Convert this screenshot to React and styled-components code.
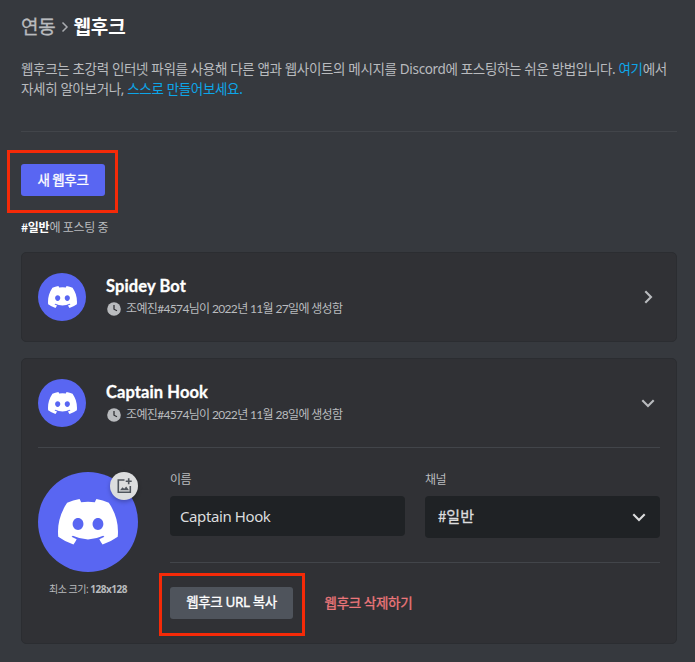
import React from "react";
import styled, { createGlobalStyle } from "styled-components";

const Global = createGlobalStyle`
  *, *::before, *::after { box-sizing: border-box; }
  body {
    margin: 0;
    background: #36393e;
    font-family: "Noto Sans CJK KR", sans-serif;
    overflow: hidden;
  }
`;

const Page = styled.main`
  width: 695px;
  height: 662px;
  padding: 0 18px 0 21px;
  display: flex;
  flex-direction: column;
  background: #36393e;
  color: #b9bbbe;
`;

const Line = styled.span`
  display: block;
  white-space: nowrap;
  font-family: ${(p) => (p.$latin ? `"${p.$latin}", ` : "")}"Noto Sans CJK KR", sans-serif;
  font-size: ${(p) => p.$size}px;
  line-height: ${(p) => p.$lh || 20}px;
  font-weight: ${(p) => p.$weight || 400};
  letter-spacing: ${(p) => p.$ls || 0}px;
  color: ${(p) => p.$color || "#b9bbbe"};
  -webkit-text-stroke: ${(p) => (p.$medium ? 0.3 : 0)}px;
`;

const Breadcrumb = styled.h1`
  display: flex;
  align-items: center;
  height: 24px;
  margin: 14px 0 0;
`;

const CrumbArrow = styled.svg`
  width: 8px;
  height: 12px;
  margin: 2px 4px 0 6px;
  fill: none;
  stroke: #a9abaf;
  stroke-width: 1.5;
`;

const Description = styled.p`
  margin: 21px 0 0;
`;

const Link = styled.a`
  color: #0da5e8;
`;

const Divider = styled.hr`
  width: 100%;
  height: 1px;
  border: 0;
  margin: ${(p) => p.$margin || 0};
  background: #42454a;
`;

const Button = styled.button`
  position: relative;
  display: flex;
  align-items: center;
  justify-content: center;
  width: ${(p) => p.$width}px;
  height: 32px;
  padding: 0 0 2px;
  border: 0;
  border-radius: 3px;
  background: ${(p) => (p.$primary ? "#5966f2" : "#4f545c")};
`;

const Highlight = styled.span`
  position: absolute;
  top: ${(p) => p.$top}px;
  left: ${(p) => p.$left}px;
  width: ${(p) => p.$width}px;
  height: 63px;
  border: 3px solid #f52a08;
  pointer-events: none;
`;

const Posting = styled.div`
  margin: 21px 0 16px;
`;

const Strong = styled.strong`
  font-weight: 700;
  color: #fff;
`;

const Card = styled.section`
  height: ${(p) => p.$height}px;
  margin-bottom: 16px;
  padding: 20px 16px;
  border: 1px solid #2b2d31;
  border-radius: 5px;
  background: #303135;
`;

const CardHeader = styled.header`
  display: flex;
  align-items: center;
  height: 48px;
`;

const Avatar = styled.div`
  position: relative;
  display: flex;
  flex-shrink: 0;
  align-items: center;
  justify-content: center;
  width: ${(p) => p.$size}px;
  height: ${(p) => p.$size}px;
  border-radius: 50%;
  background: #5966f2;
`;

const Logo = styled.svg`
  width: ${(p) => p.$width}px;
  height: auto;
  fill: #fff;
`;

const HookInfo = styled.div`
  flex: 1;
  margin-left: 20px;
`;

const Meta = styled.div`
  display: flex;
  align-items: center;
  gap: 5px;
  margin-top: 4px;
`;

const Clock = styled.svg`
  width: 14px;
  height: 14px;
  margin-left: 1px;
`;

const Chevron = styled.svg`
  width: 24px;
  height: 24px;
  fill: none;
  stroke: ${(p) => p.$color || "#b9bbbe"};
  stroke-width: 2.1;
`;

const Body = styled.div`
  display: grid;
  grid-template-columns: 100px 490px;
  column-gap: 32px;
  padding-top: 24px;
`;

const AvatarColumn = styled.div`
  display: flex;
  flex-direction: column;
  align-items: center;
  gap: 9px;
`;

const UploadBadge = styled.span`
  position: absolute;
  top: 0;
  right: 0;
  width: 28px;
  height: 28px;
  border-radius: 50%;
  background: #dcddde;
  box-shadow: 0 2px 4px rgba(0, 0, 0, 0.25);
`;

const Fields = styled.div`
  display: grid;
  grid-template-columns: 235px 235px;
  column-gap: 20px;
  height: 66px;
`;

const Control = styled.div`
  display: flex;
  align-items: center;
  justify-content: space-between;
  height: ${(p) => p.$height}px;
  margin-top: 9px;
  padding: ${(p) => p.$padding};
  border-radius: 4px;
  background: #1f2225;
`;

const Label = styled(Line)`
  margin-top: -1px;
`;

const Actions = styled.div`
  display: flex;
  align-items: center;
  gap: 31.500px;
`;

const RaisedLine = styled(Line)`
  padding-bottom: 2px;
`;

function DiscordLogo({ width }) {
  return (
    <Logo $width={width} viewBox="0 0 127.14 96.36">
      <path d="M107.7,8.07A105.15,105.15,0,0,0,81.47,0a72.06,72.06,0,0,0-3.36,6.83A97.68,97.68,0,0,0,49,6.83,72.37,72.37,0,0,0,45.64,0,105.89,105.89,0,0,0,19.39,8.09C2.79,32.65-1.71,56.6.54,80.21h0A105.73,105.73,0,0,0,32.71,96.36,77.7,77.7,0,0,0,39.6,85.25a68.42,68.42,0,0,1-10.85-5.18c.91-.66,1.8-1.34,2.66-2a75.57,75.57,0,0,0,64.32,0c.87.71,1.76,1.39,2.66,2a68.68,68.68,0,0,1-10.87,5.19,77,77,0,0,0,6.89,11.1A105.25,105.25,0,0,0,126.6,80.22h0C129.24,52.84,122.09,29.11,107.7,8.07ZM42.45,65.69C36.18,65.69,31,60,31,53s5-12.74,11.43-12.74S54,46,53.89,53,48.84,65.69,42.45,65.69Zm42.24,0C78.41,65.69,73.25,60,73.25,53s5-12.74,11.44-12.74S96.23,46,96.12,53,91.08,65.69,84.69,65.69Z" />
    </Logo>
  );
}

function HookHeader({ name, date, open }) {
  return (
    <CardHeader>
      <Avatar $size={48}>
        <DiscordLogo width={29} />
      </Avatar>
      <HookInfo>
        <Line $latin="Lato" $size={16.5} $weight={700} $ls={0.1} $color="#fff" $medium>{name}</Line>
        <Meta>
          <Clock viewBox="0 0 14 14">
            <circle cx="7" cy="7" r="6.8" fill="#b9bbbe" />
            <path d="M7 3v4.2l3 1.6" fill="none" stroke="#303135" strokeWidth="1.3" />
          </Clock>
          <Line $latin="Lato" $size={12} $lh={18} $ls={-0.65}>{date}</Line>
        </Meta>
      </HookInfo>
      <Chevron viewBox="0 0 24 24">
        <path d={open ? "M6.3 9.3L12 15l5.7-5.7" : "M9.3 6.3L15 12l-5.7 5.7"} />
      </Chevron>
    </CardHeader>
  );
}

export default function App() {
  return (
    <Page>
      <Global />
      <Breadcrumb>
        <Line $size={19} $medium $ls={-0.3}>연동</Line>
        <CrumbArrow viewBox="0 0 8 12">
          <path d="M1.5 1.5L6 6l-4.5 4.5" />
        </CrumbArrow>
        <Line $size={19} $weight={700} $color="#fff">웹후크</Line>
      </Breadcrumb>
      <Description>
        <Line $latin="Noto Sans" $size={13.5} $ls={-0.34}>
          웹후크는 초강력 인터넷 파워를 사용해 다른 앱과 웹사이트의 메시지를 Discord에 포스팅하는 쉬운 방법입니다. <Link>여기</Link>에서
        </Line>
        <Line $latin="Noto Sans" $size={13.5} $ls={-0.34}>
          자세히 알아보거나, <Link>스스로 만들어보세요.</Link>
        </Line>
      </Description>
      <Divider $margin="32px 0" />
      <Button $primary $width={84}>
        <Line $size={13.5} $medium $ls={-0.3} $color="#fff">새 웹후크</Line>
        <Highlight $top={-14} $left={-14} $width={111} />
      </Button>
      <Posting>
        <Line $size={12} $lh={19} $ls={-0.25}><Strong>#일반</Strong>에 포스팅 중</Line>
      </Posting>
      <Card $height={90}>
        <HookHeader name="Spidey Bot" date="조예진#4574님이 2022년 11월 27일에 생성함" />
      </Card>
      <Card $height={286}>
        <HookHeader open name="Captain Hook" date="조예진#4574님이 2022년 11월 28일에 생성함" />
        <Divider $margin="20px 0 0" />
        <Body>
          <AvatarColumn>
            <Avatar $size={100}>
              <DiscordLogo width={60} />
              <UploadBadge>
                <svg width="28" height="28" viewBox="0 0 28 28" fill="none" stroke="#4f545c">
                  <path d="M14.5 8H8.3v12.2h12V14M18.7 6.3v6M15.7 9.3h6" strokeWidth="1.6" />
                  <path d="M10 18.3l2.5-3 1.7 1.5 2-2.200 2.800 3.700z" fill="#4f545c" stroke="none" />
                </svg>
              </UploadBadge>
            </Avatar>
            <Line $latin="Noto Sans" $size={10} $lh={16} $ls={-0.5}>최소 크기: <b>128x128</b></Line>
          </AvatarColumn>
          <div>
            <Fields>
              <div>
                <Label $size={12} $lh={16} $ls={-0.5}>이름</Label>
                <Control $height={40} $padding="0 10px">
                  <Line $latin="Noto Sans" $size={15} $ls={-0.4} $color="#dcddde">Captain Hook</Line>
                </Control>
              </div>
              <div>
                <Label $size={12} $lh={16} $ls={-0.5}>채널</Label>
                <Control $height={42} $padding="0 9px 0 13px">
                  <RaisedLine $size={15} $medium $color="#dcddde">#일반</RaisedLine>
                  <Chevron $color="#dcddde" viewBox="0 0 24 24">
                    <path d="M6.3 9.3L12 15l5.7-5.7" />
                  </Chevron>
                </Control>
              </div>
            </Fields>
            <Divider $margin="24px 0" />
            <Actions>
              <Button $width={123}>
                <Line $latin="Noto Sans" $size={13.5} $medium $ls={-0.4} $color="#fff">웹후크 URL 복사</Line>
                <Highlight $top={-14} $left={-11} $width={146} />
              </Button>
              <RaisedLine $size={13.5} $medium $ls={-0.25} $color="#ed777b">웹후크 삭제하기</RaisedLine>
            </Actions>
          </div>
        </Body>
      </Card>
    </Page>
  );
}
